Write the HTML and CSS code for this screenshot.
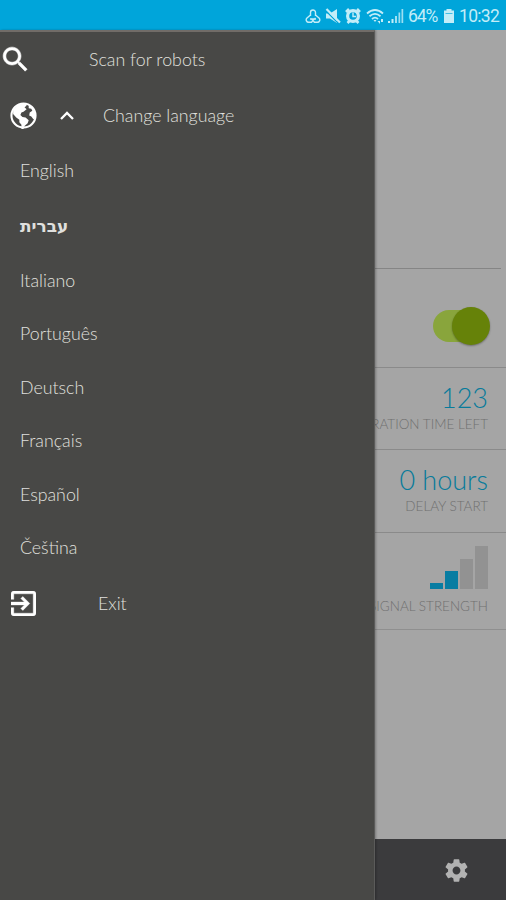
FILE: index.html
```
<!DOCTYPE html>
<html lang="en">
<head>
<meta charset="utf-8">
<title>Robot menu</title>
<link rel="stylesheet" href="styles.css">
</head>
<body>
<div class="phone">
  <header class="status">
    <svg class="s-share" viewBox="0 0 16 16"><g fill="none" stroke="currentColor" stroke-width="1.400"><path d="M5.500 8V4.500a2.500 2.500 0 0 1 5 0V8M5.500 7L2 10a2.500 2.500 0 0 0 2 4.300h2.500L8 12.500M10.500 7l3.500 3a2.500 2.500 0 0 1-2 4.300H9.500L6 10.500M10.500 10L8 12.500M5 11h6"/></g></svg>
    <svg class="s-mute" viewBox="0 0 16 16"><path fill="currentColor" d="M1 5.500h4L12 1v14l-7-4.500H1z"/><path d="M1 3l13 13" stroke="#00a5da" stroke-width="1.200"/><path d="M1.500 1l13.500 13.500" stroke="currentColor" stroke-width="2.200"/></svg>
    <svg class="s-alarm" viewBox="0 0 16 16"><circle cx="8" cy="8" r="5.400" fill="none" stroke="currentColor" stroke-width="3.200"/><path d="M1 4l3-3M15 4l-3-3M2.500 15l2.500-2.500M13.500 15L11 12.500" stroke="currentColor" stroke-width="2.600"/><path d="M8 4.500v4h3" fill="none" stroke="currentColor" stroke-width="1.400"/></svg>
    <svg class="s-wifi" viewBox="0 0 18 16"><g fill="none" stroke="currentColor" stroke-width="1.800"><path d="M1 5.500Q9-1.500 17 5.500M3.500 8.300Q9 3.500 14.500 8.300M6 11Q9 8.300 12 11"/></g><path fill="currentColor" d="M7.500 12h3L9 14zM11.500 13h2.500v3zM15 11h2v3h-2z"/></svg>
    <svg class="s-cell" viewBox="0 0 16 16"><path fill="currentColor" d="M0 13h2v2H0zM3.500 11h2v4h-2z"/><path fill="currentColor" opacity=".8" d="M7 8h2v7H7zM10.500 4.500h1.700V15h-1.700zM13.500 1h1.700v14h-1.700z"/></svg>
    <span class="pct">64%</span>
    <svg class="s-batt" viewBox="0 0 12 16"><path fill="currentColor" d="M3.500 1h5v1.500H11V15H1V2.500h2.500z"/><path stroke="#00a5da" opacity=".65" d="M2.500 5.500h7"/></svg>
    <span class="clock">10:32</span>
  </header>
  <main class="panel">
    <section class="hero"></section>
    <section class="row power"><div class="toggle"><i class="track"></i><i class="thumb"></i></div></section>
    <section class="row stat"><div class="value">123</div><div class="label">OPERATION TIME LEFT</div></section>
    <section class="row stat delay"><div class="value">0 hours</div><div class="label">DELAY START</div></section>
    <section class="row signal"><div class="bars"><i class="b1"></i><i class="b2"></i><i class="b3"></i><i class="b4"></i></div><div class="label">SIGNAL STRENGTH</div></section>
  </main>
  <footer class="footer">
    <svg viewBox="0 0 24 24"><path fill="currentColor" d="M19.430 12.980c.04-.32.07-.64.07-.98s-.03-.66-.07-.98l2.110-1.650c.19-.15.24-.42.12-.64l-2-3.460c-.12-.22-.39-.3-.61-.22l-2.490 1c-.52-.4-1.080-.73-1.690-.98l-.38-2.650C14.460 2.180 14.250 2 14 2h-4c-.25 0-.46.18-.49.42l-.38 2.650c-.61.25-1.170.59-1.690.98l-2.490-1c-.23-.09-.49 0-.61.22l-2 3.460c-.13.22-.07.49.12.64l2.110 1.650c-.04.32-.07.65-.07.98s.03.66.07.98l-2.110 1.650c-.19.15-.24.42-.12.64l2 3.460c.12.22.39.3.61.22l2.490-1c.52.4 1.080.73 1.690.98l.38 2.650c.03.24.24.42.49.42h4c.25 0 .46-.18.49-.42l.38-2.650c.61-.25 1.170-.59 1.690-.98l2.490 1c.23.09.49 0 .61-.22l2-3.460c.12-.22.07-.49-.12-.64l-2.110-1.650zM12 15.500c-1.930 0-3.500-1.570-3.500-3.500s1.570-3.500 3.500-3.500 3.500 1.570 3.500 3.500-1.570 3.500-3.500 3.500z"/></svg>
  </footer>
  <nav class="drawer">
    <a class="item scan"><svg viewBox="0 0 24 24"><path fill="currentColor" stroke="currentColor" stroke-width=".4" d="M15.500 14h-.79l-.28-.27C15.410 12.590 16 11.110 16 9.500 16 5.910 13.090 3 9.500 3S3 5.910 3 9.500 5.910 16 9.500 16c1.610 0 3.090-.59 4.230-1.570l.27.28v.79l5 4.990L20.490 19l-4.990-5zm-6 0C7.010 14 5 11.990 5 9.500S7.010 5 9.500 5 14 7.010 14 9.500 11.990 14 9.500 14z"/></svg><span>Scan for robots</span></a>
    <a class="item language"><svg class="globe" viewBox="0 0 26 26"><circle cx="13" cy="13" r="11.600" fill="none" stroke="currentColor" stroke-width="2"/><path fill="currentColor" d="M3 7.500L8 2.500l7-1 1 2-2 1.500 2 2-3 2.500-2 .5-1 2.500 2 2 3 .5 3 2.500-1 3-3 2.500-1 3h-2v-4l-2-2.500v-2.500l-3-2-3-3.500zM18 3l3 1.500 3.500 6v5l-2 1-2-2.500-2-1 .5-3 2.500-1.500-1-2-2.500-.5z"/></svg><svg class="chevron" viewBox="0 0 16 10"><path d="M2 8l6-6 6 6" fill="none" stroke="currentColor" stroke-width="2.300"/></svg><span>Change language</span></a>
    <a class="item lang">English</a>
    <a class="item lang hebrew" lang="he">עברית</a>
    <a class="item lang">Italiano</a>
    <a class="item lang">Português</a>
    <a class="item lang">Deutsch</a>
    <a class="item lang">Français</a>
    <a class="item lang">Español</a>
    <a class="item lang">Čeština</a>
    <a class="item exit"><svg viewBox="3 3 18 18"><path fill="currentColor" stroke="currentColor" stroke-width=".3" d="M10.090 15.590L11.500 17l5-5-5-5-1.410 1.410L12.670 11H3v2h9.670l-2.580 2.590zM19 3H5c-1.110 0-2 .9-2 2v4h2V5h14v14H5v-4H3v4c0 1.100.89 2 2 2h14c1.100 0 2-.9 2-2V5c0-1.100-.9-2-2-2z"/></svg><span>Exit</span></a>
  </nav>
</div>
</body>
</html>
```
FILE: styles.css
```
* { box-sizing: border-box; }
body { margin: 0; font-family: Lato, "Noto Sans", "DejaVu Sans", sans-serif; }
svg { display: block; flex: none; }
.phone { position: relative; width: 506px; height: 900px; display: flex; flex-direction: column; overflow: hidden; background: #a5a5a5; }
.status { height: 30px; flex: none; display: flex; align-items: center; justify-content: flex-end; padding: 2px 7px 0 0; background: #00a5da; color: #c3edf8; font-family: Roboto, sans-serif; font-size: 17.500px; white-space: nowrap; }
.s-share { width: 16px; height: 16px; margin-right: 4px; }
.s-mute { width: 16px; height: 16px; margin-right: 4px; }
.s-alarm { width: 16px; height: 16px; margin-right: 5px; }
.s-wifi { width: 18px; height: 16px; margin-right: 4px; }
.s-cell { width: 16px; height: 16px; margin-right: 4px; }
.s-batt { width: 12px; height: 16px; margin: 0 4px 0 5px; }
.pct { width: 30px; letter-spacing: -1.100px; }
.clock { width: 40px; letter-spacing: -.7px; }
.panel { flex: 1; }
.hero { height: 239px; margin-right: 5px; border-bottom: 1px solid #858585; }
.row { border-top: 1px solid #8a8a8a; padding-right: 18px; display: flex; flex-direction: column; align-items: flex-end; }
.hero + .row { border-top: 0; }
.power { height: 98px; padding: 38px 16px 0 0; }
.toggle { display: grid; width: 57px; height: 38px; align-items: center; }
.track, .thumb { grid-area: 1 / 1; }
.track { width: 50px; height: 32px; border-radius: 16px; background: #89a53c; }
.thumb { width: 38px; height: 38px; border-radius: 50%; justify-self: end; background: #668209; box-shadow: 0 1px 2px #0005; }
.stat { height: 82px; padding-top: 13px; }
.delay { height: 83px; }
.value { color: #087b9b; font-weight: 300; font-size: 27px; line-height: 34px; white-space: nowrap; }
.label { color: #707070; font-weight: 300; font-size: 13.500px; line-height: 19px; white-space: nowrap; }
.signal { height: 98px; border-bottom: 1px solid #8f8f8f; padding-top: 13px; }
.bars { display: flex; align-items: flex-end; gap: 2px; height: 43px; margin-bottom: 8px; }
.bars i { width: 13px; background: #929292; }
.bars .b1 { height: 6px; background: #087da2; }
.bars .b2 { height: 18px; background: #087da2; }
.bars .b3 { height: 30px; }
.bars .b4 { height: 43px; }
.footer { height: 61px; flex: none; display: flex; justify-content: flex-end; align-items: center; padding: 2px 36px 0 0; background: #3b3b3d; color: #b2b2b2; }
.footer svg { width: 27px; height: 27px; }
.drawer { position: absolute; left: 0; top: 30px; bottom: 0; width: 375px; display: flex; flex-direction: column; background: #484846; color: #e0e0de; border-top: 2px solid #716c68; border-right: 1px solid #5b5b5a; font-size: 17.800px; font-weight: 300; box-shadow: 1px 0 2px #0004; }
.item { display: flex; align-items: center; white-space: nowrap; flex: none; }
.item svg { color: #fff; }
.item span { padding-bottom: 2px; }
.scan { height: 55px; }
.scan svg { width: 33px; height: 33px; margin-left: -1px; }
.scan span { margin-left: 57px; }
.language { height: 57px; padding-left: 10px; }
.globe { width: 27px; height: 27px; }
.chevron { width: 16px; height: 10px; margin-left: 22px; }
.language span { margin-left: 28px; padding-bottom: 1px; }
.lang { height: 53.400px; padding: 0 0 2px 20px; }
.hebrew { height: 57px; font-size: 16.900px; font-weight: 600; padding-bottom: 0; }
.exit { height: 58px; padding-left: 11px; }
.exit svg { width: 25px; height: 25px; }
.exit span { margin-left: 62px; }
```
